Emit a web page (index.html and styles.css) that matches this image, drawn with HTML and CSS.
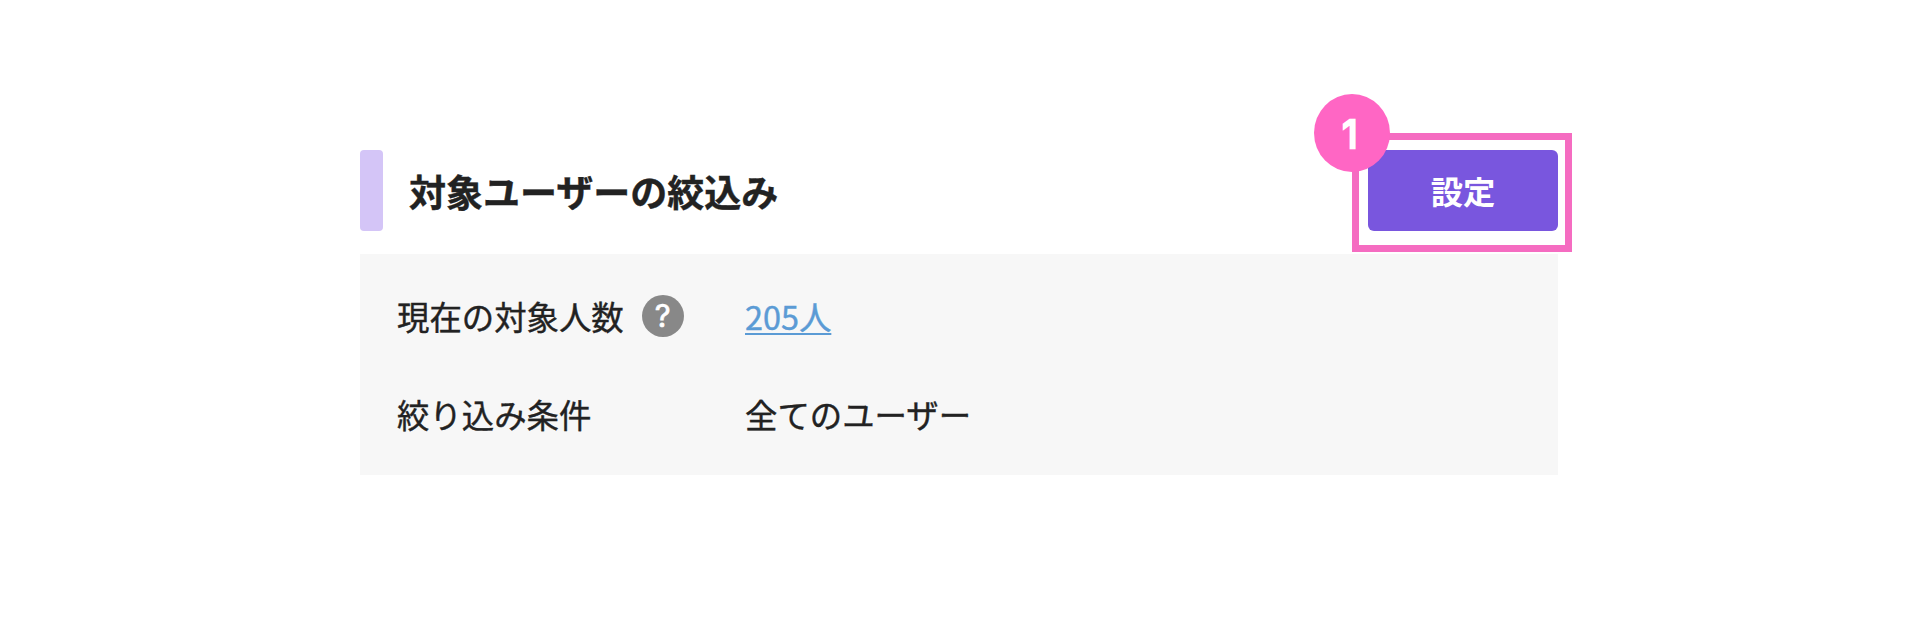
FILE: index.html
```html
<!DOCTYPE html>
<html lang="ja">
<head>
    <meta charset="UTF-8">
    <meta name="viewport" content="width=device-width, initial-scale=1.0">
    <title>対象ユーザーの絞込み</title>
    <link rel="stylesheet" href="styles.css">
</head>
<body>
    <section class="filter">
        <div class="filter-header">
            <span class="bar"></span>
            <h2>対象ユーザーの絞込み</h2>
            <div class="action">
                <button class="setting-btn">設定</button>
                <span class="frame"></span>
                <span class="step"><span class="step-num">1</span></span>
            </div>
        </div>
        <dl class="conditions">
            <dt>現在の対象人数 <span class="help">?</span></dt>
            <dd><a href="#">205人</a></dd>
            <dt>絞り込み条件</dt>
            <dd>全てのユーザー</dd>
        </dl>
    </section>
</body>
</html>
```

FILE: styles.css
```css
body {
    margin: 0;
    background: #fff;
    color: #222;
    font-family: "Noto Sans CJK JP", sans-serif;
    font-size: 32.4px;
}

.filter {
    width: 1198px;
    margin-left: 360px;
    padding-top: 150px;
}

.filter-header {
    display: flex;
    align-items: center;
    height: 81px;
    margin-bottom: 23px;
}

.bar {
    width: 23px;
    height: 81px;
    border-radius: 4px;
    background: #d4c5f7;
}

h2 {
    margin: 0 auto 0 26px;
    padding-top: 2px;
    font-size: 37px;
    line-height: 1;
    font-weight: 700;
    -webkit-text-stroke: 0.4px;
}

.action {
    position: relative;
}

.setting-btn {
    display: block;
    width: 190px;
    height: 81px;
    padding: 0 0 2px;
    border: none;
    border-radius: 6px;
    background: #7956de;
    color: #fff;
    font-family: inherit;
    font-size: 32.3px;
    font-weight: 700;
    cursor: pointer;
}

/* highlight around the button */
.frame {
    position: absolute;
    top: -17px;
    left: -16px;
    width: 220px;
    height: 119px;
    box-sizing: border-box;
    border: 7px solid #f56cc1;
}

.step {
    position: absolute;
    top: -56px;
    left: -54px;
    display: flex;
    align-items: center;
    justify-content: center;
    width: 76px;
    height: 78px;
    border-radius: 50%;
    background: #ff66c4;
    color: #fff;
}

.step-num {
    margin-right: 4px;
    padding-top: 1px;
    font-family: Inter, sans-serif;
    font-size: 38px;
    line-height: 1;
    font-weight: 400;
    -webkit-text-stroke: 2.4px #fff;
    stroke-linejoin: round;
}

.conditions {
    display: grid;
    grid-template-columns: 348px 1fr;
    grid-auto-rows: 97.5px;
    align-items: center;
    margin: 0;
    padding: 13px 37px;
    background: #f7f7f7;
    -webkit-text-stroke: 0.4px;
}

dt {
    display: flex;
    align-items: center;
    gap: 18px;
}

dd {
    margin: 0;
}

.help {
    display: flex;
    align-items: center;
    justify-content: center;
    width: 42px;
    height: 42px;
    border-radius: 50%;
    background: #888;
    color: #fff;
    font-family: Inter, sans-serif;
    font-size: 31px;
    line-height: 1;
    font-weight: 400;
    -webkit-text-stroke: 0.7px #fff;
}

a {
    color: #5b9bd5;
    text-decoration: underline;
    text-decoration-thickness: 2px;
    text-underline-offset: 3px;
    text-decoration-skip-ink: none;
}
```
